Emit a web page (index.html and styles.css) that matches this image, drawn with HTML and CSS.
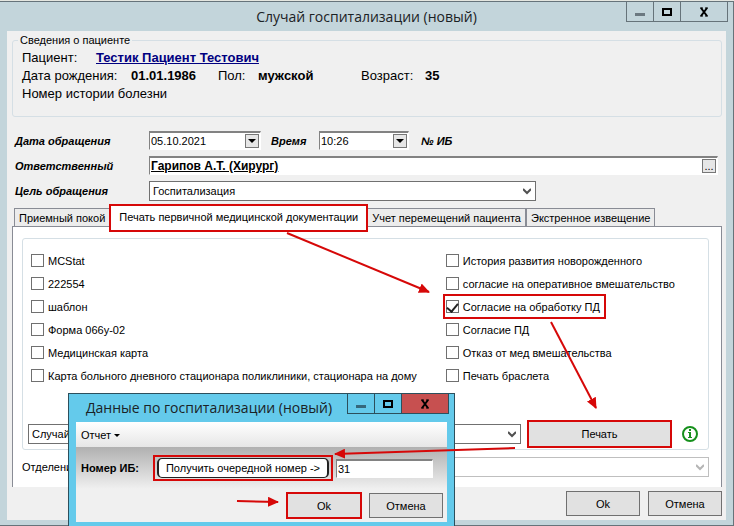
FILE: index.html
```html
<!doctype html>
<html lang="ru">
<head>
    <meta charset="UTF-8">
    <meta name="viewport" content="width=device-width, initial-scale=1">
    <title>Случай госпитализации (новый)</title>
    <link rel="stylesheet" href="styles.css">
</head>
<body>
<div class="window">
    <header class="titlebar">
        <h1>Случай госпитализации (новый)</h1>
        <div class="window-buttons">
            <button type="button" class="min" aria-label="Свернуть"><svg width="12" height="12"><path d="M1 7h10v3H1z" fill="#6b7880"/></svg></button>
            <button type="button" class="max" aria-label="Развернуть"><svg width="12" height="12"><path d="M2 3h8v6H2z" fill="none" stroke="#000" stroke-width="2"/></svg></button>
            <button type="button" class="close" aria-label="Закрыть"><svg width="12" height="12"><path d="M3 2l6 8M9 2l-6 8" stroke="#000" stroke-width="2"/><path d="M2 2h3M7 2h3M2 10h3M7 10h3" stroke="#000"/></svg></button>
        </div>
    </header>

    <main class="client">
        <fieldset class="patient">
            <legend>Сведения о пациенте</legend>
            <p><span class="name-label">Пациент:</span><a href="#">Тестик Пациент Тестович</a></p>
            <p><span class="birth-label">Дата рождения:</span><b class="birth">01.01.1986</b><span class="sex-label">Пол:</span><b class="sex">мужской</b><span class="age-label">Возраст:</span><b>35</b></p>
            <p>Номер истории болезни</p>
        </fieldset>

        <form class="visit">
            <label for="visitDate">Дата обращения</label>
            <div class="visit-row">
                <div class="sunken date">
                    <input type="text" id="visitDate" value="05.10.2021">
                    <button type="button" aria-label="Выбрать дату"><svg width="8" height="4"><path d="M0 0h8L4 4z"/></svg></button>
                </div>
                <label for="visitTime">Время</label>
                <div class="sunken time">
                    <input type="text" id="visitTime" value="10:26">
                    <button type="button" aria-label="Выбрать время"><svg width="8" height="4"><path d="M0 0h8L4 4z"/></svg></button>
                </div>
                <span class="number">№ ИБ</span>
            </div>

            <label for="doctor">Ответственный</label>
            <div class="sunken doctor">
                <input type="text" id="doctor" value="Гарипов А.Т. (Хирург)">
                <button type="button" aria-label="Выбрать врача">...</button>
            </div>

            <label for="purpose">Цель обращения</label>
            <div class="combo purpose">
                <select id="purpose"><option>Госпитализация</option></select>
                <svg width="8" height="7"><path d="M0 1l4 4 4-4"/></svg>
            </div>
        </form>

        <nav class="tabs">
            <button type="button">Приемный покой</button>
            <button type="button" class="active marked">Печать первичной медицинской документации</button>
            <button type="button">Учет перемещений пациента</button>
            <button type="button">Экстренное извещение</button>
        </nav>

        <section class="panel">
            <div class="print-group">
                <div class="checks">
                    <div>
                        <label><input type="checkbox">MCStat</label>
                        <label><input type="checkbox">222554</label>
                        <label><input type="checkbox">шаблон</label>
                        <label><input type="checkbox">Форма 066у-02</label>
                        <label><input type="checkbox">Медицинская карта</label>
                        <label><input type="checkbox">Карта больного дневного стационара поликлиники, стационара на дому</label>
                    </div>
                    <div>
                        <label><input type="checkbox">История развития новорожденного</label>
                        <label><input type="checkbox">согласие на оперативное вмешательство</label>
                        <label class="marked"><input type="checkbox" checked>Согласие на обработку ПД</label>
                        <label><input type="checkbox">Согласие ПД</label>
                        <label><input type="checkbox">Отказ от мед вмешательства</label>
                        <label><input type="checkbox">Печать браслета</label>
                    </div>
                </div>
                <div class="print-row">
                    <div class="combo">
                        <select aria-label="Случай"><option>Случай</option></select>
                        <svg width="8" height="7"><path d="M0 1l4 4 4-4"/></svg>
                    </div>
                    <button type="button" class="btn print marked">Печать</button>
                    <svg class="info" width="18" height="18" viewBox="0 0 18 18">
                        <circle cx="9" cy="9" r="7" fill="none" stroke="#16901c" stroke-width="2"/>
                        <path d="M8 4h2v2H8zM7 7h3v5h1v1H7v-1h1V8H7z" fill="#16901c"/>
                    </svg>
                </div>
            </div>
            <div class="department">
                <label for="department">Отделение</label>
                <div class="combo disabled">
                    <select id="department" disabled><option></option></select>
                    <svg width="8" height="7"><path d="M0 1l4 4 4-4"/></svg>
                </div>
            </div>
        </section>

        <footer class="actions">
            <button type="button" class="btn">Ok</button>
            <button type="button" class="btn">Отмена</button>
        </footer>
    </main>
</div>

<div class="dialog" role="dialog" aria-labelledby="dialogTitle">
    <header class="titlebar">
        <h2 id="dialogTitle">Данные по госпитализации (новый)</h2>
        <div class="window-buttons">
            <button type="button" class="min" aria-label="Свернуть"><svg width="12" height="12"><path d="M1 7h10v3H1z" fill="#35687c"/></svg></button>
            <button type="button" class="max" aria-label="Развернуть"><svg width="12" height="12"><path d="M2 3h8v6H2z" fill="none" stroke="#000" stroke-width="2"/></svg></button>
            <button type="button" class="close" aria-label="Закрыть"><svg width="12" height="12"><path d="M3 2l6 8M9 2l-6 8" stroke="#000" stroke-width="2"/><path d="M2 2h3M7 2h3M2 10h3M7 10h3" stroke="#000"/></svg></button>
        </div>
    </header>
    <div class="dialog-body">
        <div class="toolbar">
            <button type="button">Отчет <svg width="6" height="3"><path d="M0 0h6L3 3z"/></svg></button>
        </div>
        <div class="number-row">
            <label for="caseNumber">Номер ИБ:</label>
            <div class="get-number marked"><button type="button">Получить очередной номер -&gt;</button></div>
            <div class="sunken"><input type="text" id="caseNumber" value="31"></div>
        </div>
        <div class="actions">
            <button type="button" class="btn marked">Ok</button>
            <button type="button" class="btn">Отмена</button>
        </div>
    </div>
</div>

<!-- Стрелки: порядок действий -->
<svg class="arrows" width="734" height="526">
    <defs>
        <marker id="head" markerUnits="userSpaceOnUse" markerWidth="12" markerHeight="10" refX="10" refY="5" orient="auto">
            <path d="M0 0l11 5-11 5z" fill="#d60808"/>
        </marker>
    </defs>
    <g stroke="#d60808" stroke-width="2">
        <path d="M287 233L429 292" marker-end="url(#head)"/>
        <path d="M551 322L596 408" marker-end="url(#head)"/>
        <path d="M515 448L335 454" marker-end="url(#head)"/>
        <path d="M237 501L278 502" marker-end="url(#head)"/>
    </g>
</svg>
</body>
</html>
```

FILE: styles.css
```css
* {
    box-sizing: border-box;
}
body {
    margin: 0;
    padding-top: 1px;
    min-height: 100vh;
    position: relative;
    overflow: hidden;
    display: flex;
    background: #e4e6e0;
    font-family: "Liberation Sans", Arial, sans-serif;
    font-size: 11px;
    color: #000;
}
button, input, select {
    font: inherit;
    color: inherit;
    margin: 0;
}
p, h1, h2 {
    margin: 0;
}

/* Окна */
.window {
    flex: 1;
    display: flex;
    flex-direction: column;
    padding: 0 7px 5px;
    background: #c3d5db;
    border: 1px solid #66737a;
    border-left: 0;
}
.titlebar {
    position: relative;
    font-family: "Open Sans", sans-serif;
}
.titlebar h1, .titlebar h2 {
    font-size: 14px;
    font-weight: normal;
    line-height: 29px;
    text-align: center;
    color: #1b2225;
}
.window-buttons {
    position: absolute;
    top: 0;
    right: -2px;
    display: flex;
    border: 1px solid #66737a;
    border-top: 0;
}
.window-buttons button {
    width: 27px;
    height: 19px;
    padding: 0;
    background: none;
    border: 0;
    border-right: 1px solid #66737a;
}
.window-buttons .close {
    width: 46px;
    border-right: 0;
}
.window-buttons svg {
    display: block;
    margin: auto;
}
.client {
    flex: 1;
    display: flex;
    flex-direction: column;
    padding: 2px 4px 4px 5px;
    background: #f0f0f0;
}

/* Пациент */
.patient {
    margin: 0;
    padding: 2px 9px 13px;
    border: 1px solid #d5dfe5;
    border-radius: 3px;
    font-size: 13px;
    line-height: 18px;
}
.patient legend {
    margin-left: -4px;
    padding: 0 2px;
    font-size: 11px;
    line-height: 14px;
}
.patient p {
    display: flex;
}
.patient a {
    color: #000080;
    font-weight: bold;
}
.name-label {
    width: 74px;
}
.birth-label {
    width: 109px;
}
.birth {
    width: 87px;
}
.sex-label {
    width: 40px;
}
.sex {
    width: 103px;
}
.age-label {
    width: 64px;
}

/* Обращение */
.visit {
    display: grid;
    grid-template-columns: 134px 1fr;
    gap: 6px 0;
    align-items: center;
    margin: 14px 4px 0 3px;
}
.visit label, .number {
    font-size: 11px;
    font-weight: bold;
    font-style: italic;
}
.visit-row {
    display: flex;
    align-items: center;
}
.visit-row label {
    width: 58px;
    padding-left: 10px;
}
.number {
    margin-left: 12px;
}
.sunken {
    display: flex;
    height: 19px;
    padding: 1px;
    background: #fff;
    border: 1px solid #fff;
    border-top: 2px solid #828282;
    border-left: 1px solid #828282;
}
.sunken input {
    flex: 1;
    min-width: 0;
    padding: 0;
    border: 0;
    background: none;
}
.sunken button {
    display: flex;
    align-items: center;
    justify-content: center;
    width: 14px;
    padding: 0;
    background: #e6e6e6;
    border: 1px solid #777;
}
.date {
    width: 112px;
}
.time {
    width: 90px;
}
.sunken.doctor input {
    font-size: 12px;
    font-weight: bold;
    text-decoration: underline;
}
.combo {
    display: flex;
    align-items: center;
    height: 20px;
    background: #fff;
    border: 1px solid #707070;
}
.combo select {
    flex: 1;
    align-self: stretch;
    min-width: 0;
    padding: 0 3px;
    border: 0;
    background: none;
    appearance: none;
}
.combo svg {
    margin-right: 4px;
    fill: none;
    stroke: #505050;
    stroke-width: 2;
}
.purpose {
    width: 68%;
}

/* Вкладки */
.tabs {
    display: flex;
    align-items: flex-end;
    height: 22px;
    margin: 3px 0 0 2px;
}
.tabs button {
    height: 18px;
    padding: 0 4px;
    background: #ececec;
    border: 1px solid #898c95;
    border-bottom: 0;
    white-space: nowrap;
}
.tabs .active {
    position: relative;
    height: 26px;
    margin-bottom: -5px;
    padding: 0 9px 3px;
    background: #fff;
    border: 0;
}
.marked {
    outline: 2px solid #d60808;
    outline-offset: -1px;
}
.panel {
    flex: 1;
    padding: 11px 12px 9px 9px;
    background: #fff;
    border: 1px solid #898c95;
    border-bottom: 0;
}
.print-group {
    padding: 10px 8px 2px 5px;
    border: 1px solid #d5dfe5;
    border-radius: 3px;
}
.checks {
    display: grid;
    grid-template-columns: 62fr 38fr;
    padding-left: 3px;
}
.checks label {
    display: flex;
    align-items: center;
    gap: 4px;
    width: max-content;
    height: 23px;
    white-space: nowrap;
}
.checks input {
    appearance: none;
    display: grid;
    place-items: center;
    width: 13px;
    height: 13px;
    margin: 0;
    background: #fff;
    border: 1px solid #707070;
}
.checks input:checked::after {
    content: "";
    width: 5px;
    height: 9px;
    margin-bottom: 2px;
    border: solid #222;
    border-width: 0 2px 2px 0;
    transform: rotate(40deg);
}
.checks .marked {
    outline-offset: 1px;
    height: 19px;
    margin: 2px 0;
    padding-right: 3px;
}
.print-row {
    display: grid;
    grid-template-columns: 1fr 143px 22px;
    gap: 7px;
    align-items: center;
    margin-top: 34px;
}
.btn {
    height: 25px;
    background: #e1e1e1;
    border: 1px solid #707070;
}
.print-row .print {
    height: 26px;
}
.info {
    margin-left: 3px;
}
.department {
    display: grid;
    grid-template-columns: 64px 1fr;
    align-items: center;
    margin-top: 7px;
}
.disabled {
    border-color: #bfbfbf;
}
.disabled svg {
    stroke: #b5b5b5;
}
.actions {
    display: flex;
    justify-content: flex-end;
    gap: 8px;
    padding-top: 4px;
}
.actions .btn {
    width: 74px;
}

/* Диалог поверх окна */
.dialog {
    position: absolute;
    left: 68px;
    top: 393px;
    width: 387px;
    padding: 0 7px 7px;
    background: #64caeb;
    border: 1px solid #2c4f5c;
}
.dialog .titlebar h2 {
    padding-left: 10px;
    line-height: 28px;
    text-align: left;
}
.dialog .window-buttons, .dialog .window-buttons button {
    border-color: #2c4f5c;
}
.dialog .close {
    background: #c75050;
}
.dialog-body {
    background: #f0f0f0;
}
.toolbar {
    height: 25px;
    background: linear-gradient(#fff, #e6e6e6);
}
.toolbar button {
    height: 25px;
    padding: 0 5px;
    background: none;
    border: 0;
}
.toolbar svg {
    vertical-align: middle;
}
.number-row {
    display: flex;
    align-items: center;
    height: 42px;
    padding: 0 14px 0 5px;
    background: linear-gradient(#b0b0b0, #f0f0f0);
}
.number-row label {
    flex: none;
    width: 73px;
    font-weight: bold;
    white-space: nowrap;
}
.get-number {
    flex: none;
    display: flex;
    height: 24px;
    padding: 2px 3px;
}
.get-number button {
    width: 172px;
    padding: 0;
    background: #fff;
    border: 2px solid #222;
    border-width: 1px 2px;
    border-radius: 5px;
    white-space: nowrap;
}
.number-row .sunken {
    flex: 1;
    min-width: 0;
    margin-left: 4px;
}
.dialog .actions {
    padding: 4px 4px 4px 0;
}
.arrows {
    position: absolute;
    left: 0;
    top: 0;
    pointer-events: none;
}
```
